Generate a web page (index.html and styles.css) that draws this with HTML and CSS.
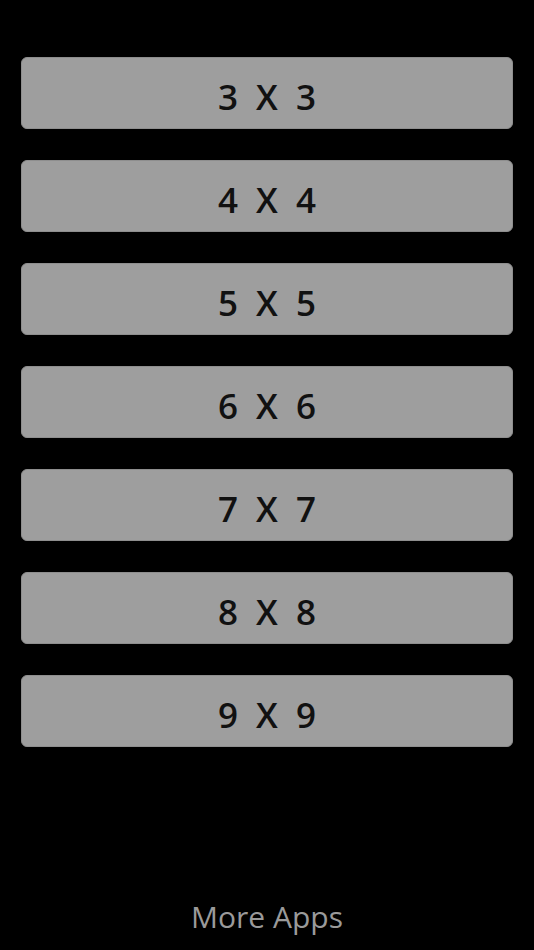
FILE: index.html
```html
<!DOCTYPE html>
<html lang="en">
<head>
    <meta charset="UTF-8">
    <meta name="viewport" content="width=device-width, initial-scale=1.0">
    <title>Grid Sizes</title>
    <link rel="stylesheet" href="styles.css">
</head>
<body>
    <div class="screen">
        <div class="menu">
            <button class="size-btn">3 X 3</button>
            <button class="size-btn">4 X 4</button>
            <button class="size-btn">5 X 5</button>
            <button class="size-btn">6 X 6</button>
            <button class="size-btn">7 X 7</button>
            <button class="size-btn">8 X 8</button>
            <button class="size-btn">9 X 9</button>
        </div>
        <a class="more-apps" href="#">More Apps</a>
    </div>
</body>
</html>
```

FILE: styles.css
```css
html, body {
    margin: 0;
    padding: 0;
    background-color: #000;
}
body {
    font-family: "Open Sans", "DejaVu Sans", sans-serif;
}
.screen {
    height: 950px;
    display: flex;
    flex-direction: column;
    box-sizing: border-box;
    padding: 57px 21px 0 21px;
}
.menu {
    display: flex;
    flex-direction: column;
    gap: 31px;
}
.size-btn {
    height: 72px;
    width: 100%;
    background-color: #9e9e9e;
    border: 1px solid #8e8e8e;
    border-radius: 6px;
    color: #111;
    font-family: inherit;
    font-size: 35px;
    font-weight: 600;
    word-spacing: 9px;
    padding: 6px 0 0 0;
    cursor: pointer;
}
.more-apps {
    margin-top: auto;
    margin-bottom: 13px;
    align-self: center;
    color: #9a9a9a;
    font-size: 30px;
    text-decoration: none;
}
```
